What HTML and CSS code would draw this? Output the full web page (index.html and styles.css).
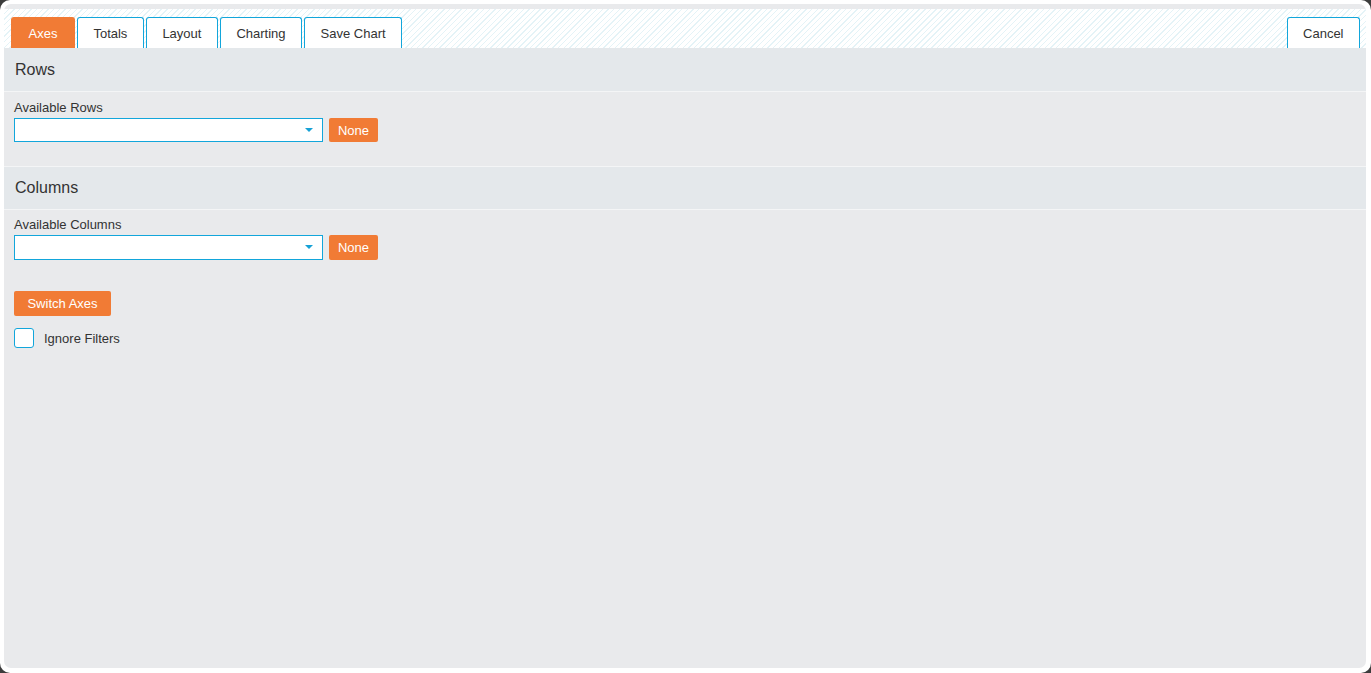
FILE: index.html
```html
<!DOCTYPE html>
<html>
<head>
<meta charset="utf-8">
<link rel="stylesheet" href="styles.css">
</head>
<body>
<div class="frame">
  <div class="inner">
    <div class="tabbar">
      <div class="tabs">
        <div class="tab active">Axes</div>
        <div class="tab">Totals</div>
        <div class="tab">Layout</div>
        <div class="tab">Charting</div>
        <div class="tab">Save Chart</div>
      </div>
      <div class="tab cancel">Cancel</div>
    </div>
    <div class="content">
      <div class="sec-head">Rows</div>
      <div class="sec-body">
        <div class="label">Available Rows</div>
        <div class="field-row">
          <div class="select"><span class="arrow"></span></div>
          <button class="btn none">None</button>
        </div>
      </div>
      <div class="sec-head second">Columns</div>
      <div class="sec-body last">
        <div class="label">Available Columns</div>
        <div class="field-row">
          <div class="select"><span class="arrow"></span></div>
          <button class="btn none">None</button>
        </div>
        <button class="btn switch">Switch Axes</button>
        <label class="check"><span class="box"></span><span>Ignore Filters</span></label>
      </div>
    </div>
  </div>
</div>
</body>
</html>
```
FILE: styles.css
```css
html, body {
  margin: 0;
  padding: 0;
  background: #3c3c3c;
  font-family: "Liberation Sans", Arial, sans-serif;
  color: #333;
}
.frame {
  width: 1371px;
  height: 673px;
  box-sizing: border-box;
  background: #fff;
  border-radius: 10px;
  padding: 4px 5px 5px 4px;
  display: flex;
}
.inner {
  flex: 1;
  background: #e9eaec;
  border-radius: 7px;
  padding-top: 5px;
  display: flex;
  flex-direction: column;
  overflow: hidden;
}
.tabbar {
  display: flex;
  justify-content: space-between;
  align-items: flex-end;
  padding: 8px 6px 0 7px;
  height: 31px;
  background-color: #fff;
  background-image: repeating-linear-gradient(135deg, #fff 0, #fff 3px, #e4f3f7 3px, #e4f3f7 4px);
}
.tabs {
  display: flex;
  gap: 2px;
}
.tab {
  height: 30px;
  line-height: 32px;
  padding: 0 15.5px;
  font-size: 13px;
  color: #333;
  background: #fff;
  border: 1px solid #12a6db;
  border-bottom: none;
  border-radius: 3px 3px 0 0;
}
.tab.active {
  background: #f17b35;
  border-color: #f17b35;
  color: #fff;
  padding: 0 16.5px;
}
.content {
  flex: 1;
}
.sec-head {
  height: 43px;
  line-height: 44px;
  padding-left: 11px;
  font-size: 16px;
  color: #333;
  background: #e4e8eb;
  border-bottom: 1px solid #f4f5f6;
}
.sec-head.second {
  height: 42px;
  line-height: 42px;
}
.sec-body {
  padding: 8px 10px 24px;
  border-bottom: 1px solid #f4f5f6;
}
.sec-body.last {
  border-bottom: none;
  padding-top: 7px;
}
.label {
  font-size: 13px;
  line-height: 15px;
  margin-bottom: 3px;
}
.field-row {
  display: flex;
  align-items: center;
  gap: 6px;
}
.select {
  width: 307px;
  height: 22px;
  background: #fff;
  border: 1px solid #12a6db;
  position: relative;
}
.last .select { height: 23px; }
.arrow {
  position: absolute;
  right: 9px;
  top: 9px;
  width: 0;
  height: 0;
  border-left: 4px solid transparent;
  border-right: 4px solid transparent;
  border-top: 4px solid #16a1d6;
}
.btn {
  height: 24px;
  padding: 0;
  border: none;
  border-radius: 2px;
  background: #f17b35;
  color: #fff;
  font-family: "Liberation Sans", Arial, sans-serif;
  font-size: 13px;
}
.btn.none { width: 49px; }
.last .btn { height: 25px; }
.btn.switch {
  display: block;
  margin-top: 31px;
  width: 97px;
}
.check {
  display: flex;
  align-items: center;
  gap: 10px;
  margin-top: 12px;
  font-size: 13px;
}
.box {
  width: 18px;
  height: 18px;
  background: #fff;
  border: 1px solid #12a6db;
  border-radius: 3px;
}
```
